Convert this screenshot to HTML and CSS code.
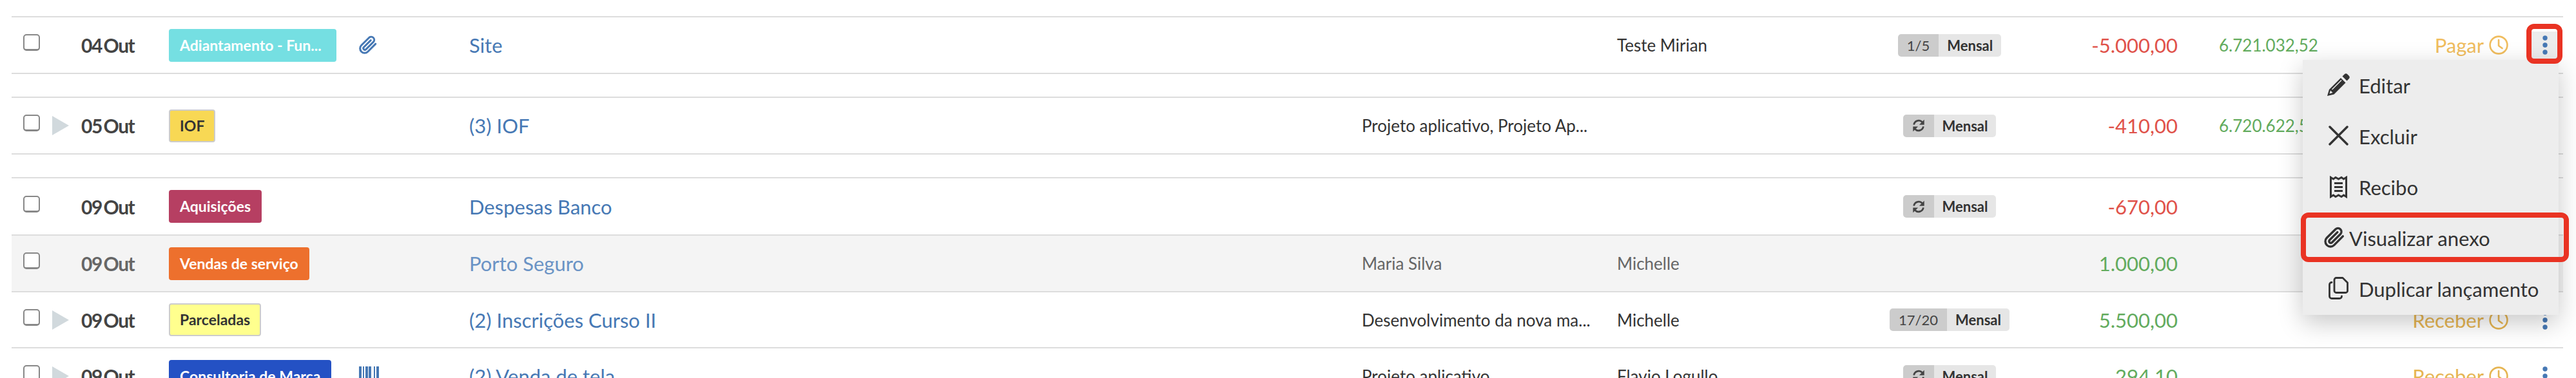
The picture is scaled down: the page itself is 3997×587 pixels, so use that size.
FILE: index.html
```html
<!DOCTYPE html>
<html>
<head>
    <title>Lançamentos</title>
    <meta charset="UTF-8">
    <link rel="stylesheet" href="styles.css">
</head>
<body>
    <svg class="sprites" width="0" height="0">
        <symbol id="i-clip" viewBox="0 0 24 24"><path fill="none" stroke="currentColor" stroke-width="2.4" stroke-linecap="round" stroke-linejoin="round" d="M21.4 10.5l-9.6 9.7a5.6 5.6 0 0 1-8-8l9.7-9.6a3.8 3.8 0 0 1 5.4 5.3l-9.4 9.4a1.9 1.9 0 0 1-2.7-2.7l8.6-8.5"/></symbol>
        <symbol id="i-clock" viewBox="0 0 30 30"><circle cx="15" cy="15" r="13.4" fill="none" stroke="currentColor" stroke-width="2.6"/><path fill="none" stroke="currentColor" stroke-width="2.6" stroke-linecap="round" stroke-linejoin="round" d="M15 7v9l5.5 4"/></symbol>
        <symbol id="i-sync" viewBox="0 0 24 24"><path fill="none" stroke="currentColor" stroke-width="3" d="M4 10.5a8.2 8.2 0 0 1 14-4.5M20 13.5a8.2 8.2 0 0 1-14 4.5"/><path fill="currentColor" d="M21.5 2v8.5H13zM2.500 22v-8.500H11z"/></symbol>
        <symbol id="i-dots" viewBox="0 0 8 30"><circle cx="4" cy="4" r="3.700"/><circle cx="4" cy="15" r="3.700"/><circle cx="4" cy="26" r="3.700"/></symbol>
        <symbol id="i-pencil" viewBox="0 0 35 35"><path fill="currentColor" d="M0 35l3-10L21 7l7.500 7.500L10.500 32.500z"/><path fill="#ededed" d="M3.500 31.500l1.500-5 3.500 3.500z"/><path fill="#ededed" d="M7 24.500L21.500 10l1 1L8 25.500z"/><path fill="currentColor" d="M23.500 4.500l3-3a3.500 3.500 0 0 1 5 0l2 2a3.500 3.500 0 0 1 0 5l-3 3z"/></symbol>
        <symbol id="i-close" viewBox="0 0 31 31"><path fill="none" stroke="currentColor" stroke-width="3.400" stroke-linecap="round" d="M2 2l27 27M29 2L2 29"/></symbol>
        <symbol id="i-receipt" viewBox="0 0 27 35"><path fill="none" stroke="currentColor" stroke-width="3" d="M1.500 2.500l4 2.500 3.500-2.500 4.500 2.500 4.500-2.500 3.500 2.500 4-2.500v30l-4-2.500-3.500 2.500-4.500-2.500-4.500 2.500-3.500-2.500-4 2.500z"/><path fill="none" stroke="currentColor" stroke-width="2.800" d="M7 11.500h13M7 17.500h13M7 23.500h13"/></symbol>
        <symbol id="i-copy" viewBox="0 0 31 35"><path fill="none" stroke="currentColor" stroke-width="2.800" stroke-linejoin="round" d="M12 1.500h10l7.500 7.500v12.500a3 3 0 0 1-3 3H12a3 3 0 0 1-3-3v-17a3 3 0 0 1 3-3z"/><path fill="none" stroke="currentColor" stroke-width="2.800" stroke-linecap="round" d="M5 8.500a3.500 3.500 0 0 0-3.500 3.500v18a3.500 3.500 0 0 0 3.500 3.500h12a3.500 3.500 0 0 0 3.500-3.500"/></symbol>
    </svg>

    <div class="list">
        <div class="row">
            <div class="sel"><span class="check"></span></div>
            <div class="date">04 Out</div>
            <div><span class="tag tag-cyan">Adiantamento - Fun...</span></div>
            <div class="extra"><svg class="clip-icon"><use href="#i-clip"/></svg></div>
            <a class="desc">Site</a>
            <div class="cell"></div>
            <div class="cell">Teste Mirian</div>
            <div class="recur"><span class="recur-n">1/5</span><span class="recur-t">Mensal</span></div>
            <div class="amount neg">-5.000,00</div>
            <div class="balance">6.721.032,52</div>
            <div class="status">Pagar <svg class="clock"><use href="#i-clock"/></svg></div>
            <div class="actions"><span class="dots-btn open"><svg class="dots"><use href="#i-dots"/></svg></span></div>
        </div>
        <div class="spacer"></div>

        <div class="row">
            <div class="sel"><span class="check"></span><span class="arrow"></span></div>
            <div class="date">05 Out</div>
            <div><span class="tag tag-yellow">IOF</span></div>
            <div class="extra"></div>
            <a class="desc">(3) IOF</a>
            <div class="cell">Projeto aplicativo, Projeto Ap...</div>
            <div class="cell"></div>
            <div class="recur"><span class="recur-n recur-icon"><svg class="sync"><use href="#i-sync"/></svg></span><span class="recur-t">Mensal</span></div>
            <div class="amount neg">-410,00</div>
            <div class="balance">6.720.622,52</div>
            <div class="status"></div>
            <div class="actions"></div>
        </div>
        <div class="spacer"></div>

        <div class="row row-tall">
            <div class="sel"><span class="check"></span></div>
            <div class="date">09 Out</div>
            <div><span class="tag tag-wine">Aquisições</span></div>
            <div class="extra"></div>
            <a class="desc">Despesas Banco</a>
            <div class="cell"></div>
            <div class="cell"></div>
            <div class="recur"><span class="recur-n recur-icon"><svg class="sync"><use href="#i-sync"/></svg></span><span class="recur-t">Mensal</span></div>
            <div class="amount neg">-670,00</div>
            <div class="balance"></div>
            <div class="status"></div>
            <div class="actions"></div>
        </div>

        <div class="row row-paid">
            <div class="sel"><span class="check"></span></div>
            <div class="date">09 Out</div>
            <div><span class="tag tag-orange">Vendas de serviço</span></div>
            <div class="extra"></div>
            <a class="desc">Porto Seguro</a>
            <div class="cell">Maria Silva</div>
            <div class="cell">Michelle</div>
            <div class="recur"></div>
            <div class="amount pos">1.000,00</div>
            <div class="balance"></div>
            <div class="status"></div>
            <div class="actions"></div>
        </div>

        <div class="row row-short">
            <div class="sel"><span class="check"></span><span class="arrow"></span></div>
            <div class="date">09 Out</div>
            <div><span class="tag tag-lemon">Parceladas</span></div>
            <div class="extra"></div>
            <a class="desc">(2) Inscrições Curso II</a>
            <div class="cell">Desenvolvimento da nova ma...</div>
            <div class="cell">Michelle</div>
            <div class="recur"><span class="recur-n">17/20</span><span class="recur-t">Mensal</span></div>
            <div class="amount pos">5.500,00</div>
            <div class="balance"></div>
            <div class="status status-in">Receber <svg class="clock"><use href="#i-clock"/></svg></div>
            <div class="actions"><span class="dots-btn"><svg class="dots"><use href="#i-dots"/></svg></span></div>
        </div>

        <div class="row">
            <div class="sel"><span class="check"></span><span class="arrow"></span></div>
            <div class="date">09 Out</div>
            <div><span class="tag tag-blue">Consultoria de Marca</span></div>
            <div class="extra">
                <svg class="barcode" viewBox="0 0 31 30"><path fill="currentColor" d="M0 0h4v30H0zM6 0h2v30H6zM10 0h4v30h-4zM15 0h4v30h-4zM23 0h2v30h-2zM27 0h4v30h-4z"/></svg>
            </div>
            <a class="desc">(2) Venda de tela</a>
            <div class="cell">Projeto aplicativo</div>
            <div class="cell">Flavio Logullo</div>
            <div class="recur"><span class="recur-n recur-icon"><svg class="sync"><use href="#i-sync"/></svg></span><span class="recur-t">Mensal</span></div>
            <div class="amount pos">294,10</div>
            <div class="balance"></div>
            <div class="status status-in">Receber <svg class="clock"><use href="#i-clock"/></svg></div>
            <div class="actions"><span class="dots-btn"><svg class="dots"><use href="#i-dots"/></svg></span></div>
        </div>
    </div>

    <div class="menu">
        <div class="menu-item"><svg class="mi mi-pencil"><use href="#i-pencil"/></svg>Editar</div>
        <div class="menu-item"><svg class="mi mi-close"><use href="#i-close"/></svg>Excluir</div>
        <div class="menu-item"><svg class="mi mi-receipt"><use href="#i-receipt"/></svg>Recibo</div>
        <div class="menu-item menu-item-tight"><svg class="mi mi-clip"><use href="#i-clip"/></svg>Visualizar anexo</div>
        <div class="menu-item"><svg class="mi mi-copy"><use href="#i-copy"/></svg>Duplicar lançamento</div>
    </div>

    <div class="mark mark-dots"></div>
    <div class="mark mark-item"></div>
</body>
</html>
```

FILE: styles.css
```css
html, body {
    margin: 0;
    height: 587px;
    overflow: hidden;
    background: #fff;
}
body {
    position: relative;
    font-family: Lato, "Open Sans", sans-serif;
    color: #333;
}
.sprites {
    position: absolute;
}
.list {
    margin: 25px 20px 0 18px;
    border-top: 2px solid #ddd;
}
.row {
    display: grid;
    grid-template-columns: 108px 136px 296px 170px 1385px 396px 374px 280px 216px 321px 192px 85px;
    align-items: center;
    height: 88px;
    box-sizing: border-box;
    border-bottom: 2px solid #ddd;
}
.row-tall {
    height: 89px;
}
.row-short {
    height: 87px;
}
.spacer {
    height: 37px;
    box-sizing: border-box;
    border-bottom: 2px solid #ddd;
}
.sel {
    display: flex;
    align-items: center;
    padding-left: 18px;
    gap: 19px;
}
.check {
    width: 26px;
    height: 26px;
    box-sizing: border-box;
    border: 2px solid #888;
    border-bottom-width: 3px;
    border-radius: 5px;
    background: #fff;
    margin-top: -8px;
}
.arrow {
    width: 0;
    height: 0;
    border-left: 26px solid #d1d9dd;
    border-top: 15px solid transparent;
    border-bottom: 15px solid transparent;
}
.date {
    font-size: 30px;
    font-weight: 700;
    letter-spacing: -1.5px;
    word-spacing: -3px;
    color: #444;
}
.tag {
    display: inline-block;
    height: 51px;
    line-height: 51px;
    box-sizing: border-box;
    padding: 0 17px;
    border-radius: 4px;
    font-size: 23px;
    font-weight: 700;
    color: #fff;
    white-space: nowrap;
    vertical-align: middle;
}
.tag-cyan { background: #75dfe2; min-width: 260px; }
.tag-wine { background: #b63f62; }
.tag-orange { background: #ed702d; }
.tag-blue { background: #2451c4; }
.tag-yellow {
    background: #f8d854;
    color: #333;
    border: 2px solid #ccc;
    line-height: 47px;
    padding: 0 15px;
}
.tag-lemon {
    background: #ffff8e;
    color: #333;
    border: 2px solid #ccc;
    line-height: 47px;
    padding: 0 15px;
}
.extra {
    display: flex;
    color: #4678b4;
}
.clip-icon {
    width: 30px;
    height: 30px;
    margin-left: -2px;
    color: #4678b4;
}
.barcode {
    width: 31px;
    height: 30px;
    margin-left: -1px;
}
.desc {
    font-size: 31px;
    color: #4678b4;
    white-space: nowrap;
}
.cell {
    font-size: 26px;
    color: #333;
    white-space: nowrap;
}
.row-paid {
    background: #f4f4f4;
}
.row-paid .date,
.row-paid .cell {
    color: #666;
}
.row-paid .desc {
    color: #6a93c5;
}
.recur {
    display: flex;
    justify-content: center;
    padding-left: 4px;
    font-size: 22px;
    line-height: 35px;
}
.recur-n {
    display: flex;
    align-items: center;
    height: 35px;
    padding: 0 14px;
    background: #ccc;
    border-radius: 5px 0 0 5px;
    color: #444;
}
.recur-icon {
    padding: 0;
    width: 48px;
    justify-content: center;
}
.recur-t {
    height: 35px;
    padding: 0 13px;
    background: #e6e6e6;
    border-radius: 0 5px 5px 0;
    font-weight: 700;
    color: #333;
}
.sync {
    width: 22px;
    height: 22px;
    color: #444;
}
.amount {
    font-size: 31px;
    text-align: right;
}
.neg { color: #e0524a; }
.pos { color: #62ab5d; }
.balance {
    padding-left: 64px;
    font-size: 26px;
    color: #62ab5d;
    white-space: nowrap;
}
.status {
    display: flex;
    justify-content: flex-end;
    align-items: center;
    gap: 8px;
    font-size: 31px;
    color: #f0bd5e;
}
.status-in {
    color: #e6b552;
}
.clock {
    width: 30px;
    height: 30px;
}
.actions {
    padding-left: 36px;
}
.dots-btn {
    display: flex;
    justify-content: center;
    align-items: center;
    width: 41px;
    height: 42px;
    color: #4678b4;
}
.dots-btn.open {
    background: #ececec;
}
.dots {
    width: 8px;
    height: 30px;
    fill: currentColor;
}
.menu {
    position: absolute;
    left: 3573px;
    top: 93px;
    width: 397px;
    padding-top: 1px;
    background: #ededed;
    box-shadow: 0 12px 36px rgba(0, 0, 0, 0.22);
}
.menu-item {
    display: flex;
    align-items: center;
    height: 79px;
    padding-left: 38px;
    font-size: 31px;
    color: #333;
    position: relative;
    top: -1px;
}
.menu-item-tight {
    padding-left: 34px;
}
.mi {
    flex: none;
    margin-right: 14px;
    color: #333;
}
.mi-pencil { width: 35px; height: 35px; margin-top: -3px; }
.mi-close { width: 31px; height: 31px; margin: -3px 16px 0 2px; }
.mi-receipt { width: 27px; height: 35px; margin: -1px 18px 0 4px; }
.mi-clip { width: 34px; height: 34px; margin: -1px 6px 0 -2px; }
.mi-copy { width: 31px; height: 35px; margin: -3px 16px 0 2px; }
.mark {
    position: absolute;
    box-sizing: border-box;
    border: 8px solid #e93323;
    border-radius: 12px;
}
.mark-dots {
    left: 3920px;
    top: 37px;
    width: 56px;
    height: 62px;
}
.mark-item {
    left: 3570px;
    top: 330px;
    width: 416px;
    height: 77px;
}
```
